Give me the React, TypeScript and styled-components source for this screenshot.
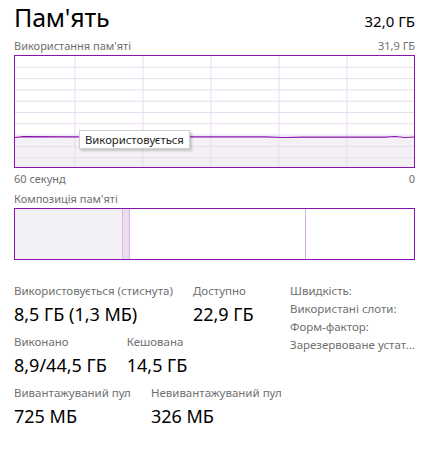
import React from "react";
import styled, { createGlobalStyle } from "styled-components";

const Global = createGlobalStyle`
  html, body { margin: 0; padding: 0; background: #ffffff; }
  body { font-family: "Noto Sans", "Open Sans", sans-serif; color: #000; }
`;

const Page = styled.div`
  width: 428px;
  height: 449px;
  box-sizing: border-box;
  padding: 0 13px 0 14px;
  display: flex;
  flex-direction: column;
  overflow: hidden;
`;

const Header = styled.div`
  display: flex;
  justify-content: space-between;
  align-items: baseline;
  height: 37px;
`;

const Title = styled.div`
  font-size: 25px;
  line-height: 34px;
  letter-spacing: -0.2px;
`;

const Total = styled.div`
  font-size: 15px;
  line-height: 20px;
`;

const Caption = styled.div<{ $h?: number }>`
  display: flex;
  justify-content: space-between;
  font-size: 11px;
  line-height: 16px;
  color: #6f6f6f;
  height: ${(p) => p.$h ?? 18}px;
  align-items: center;
`;

const Graph = styled.div`
  position: relative;
  height: 113px;
  border: 1px solid #8b12ae;
  box-sizing: border-box;
  background: #ffffff;
`;

const GraphSvg = styled.svg`
  display: block;
  width: 100%;
  height: 100%;
`;

const Tooltip = styled.div`
  position: absolute;
  left: 64px;
  top: 74px;
  height: 17px;
  padding: 0 5px;
  font-size: 11.3px;
  line-height: 17px;
  color: #222;
  background: #fff;
  border: 1px solid #cfcfcf;
  box-shadow: 2px 2px 2px rgba(0, 0, 0, 0.18);
`;

const Composition = styled.div`
  display: flex;
  height: 52px;
  border: 1px solid #8b12ae;
  box-sizing: border-box;
`;

const Segment = styled.div<{ $w?: number; $bg: string; $line?: string }>`
  ${(p) => (p.$w ? `width: ${p.$w}px;` : "flex: 1;")}
  background: ${(p) => p.$bg};
  border-right: ${(p) => (p.$line ? `1px solid ${p.$line}` : "none")};
`;

const Stats = styled.div`
  display: flex;
  margin-top: 23px;
`;

const LeftStats = styled.div`
  display: flex;
  flex-direction: column;
  width: 276px;
`;

const StatRow = styled.div<{ $h: number }>`
  display: flex;
  gap: 20px;
  height: ${(p) => p.$h}px;
`;

const Stat = styled.div`
  display: flex;
  flex-direction: column;
`;

const StatLabel = styled.div`
  font-size: 11.5px;
  line-height: 16px;
  color: #6f6f6f;
  white-space: nowrap;
`;

const StatValue = styled.div`
  font-size: 18px;
  line-height: 30px;
  color: #000;
  white-space: nowrap;
`;

const KeyList = styled.div`
  display: flex;
  flex-direction: column;
  margin-top: -1px;
`;

const KeyItem = styled.div`
  font-size: 11.5px;
  line-height: 18px;
  color: #6f6f6f;
  white-space: nowrap;
`;

const vLines = [60, 128, 196, 264, 332];
const hLines = [11.3, 22.6, 33.9, 45.2, 56.5, 67.8, 79.1, 90.4, 101.7];

export default function App() {
  return (
    <>
      <Global />
      <Page>
        <Header>
          <Title>Пам'ять</Title>
          <Total>32,0 ГБ</Total>
        </Header>
        <Caption>
          <span>Використання пам'яті</span>
          <span>31,9 ГБ</span>
        </Caption>
        <Graph>
          <GraphSvg viewBox="0 0 399 111" preserveAspectRatio="none">
            <path d="M0 80.5 L399 80.5 L399 111 L0 111 Z" fill="#f3f1f5" />
            {hLines.map((y) => (
              <line key={"h" + y} x1="0" x2="399" y1={y} y2={y} stroke="#e8dbee" strokeWidth="1" />
            ))}
            {vLines.map((x) => (
              <line key={"v" + x} x1={x} x2={x} y1="0" y2="111" stroke="#e8dbee" strokeWidth="1" />
            ))}
            <polyline
              points="0,81.5 8,80.7 60,80.9 250,80.9 268,81.5 288,81.1 370,81.1 380,80.5 390,81.5 399,81"
              fill="none"
              stroke="#8b12ae"
              strokeWidth="1.2"
            />
          </GraphSvg>
          <Tooltip>Використовується</Tooltip>
        </Graph>
        <Caption $h={21}>
          <span>60 секунд</span>
          <span>0</span>
        </Caption>
        <Caption $h={19}>
          <span>Композиція пам'яті</span>
        </Caption>
        <Composition>
          <Segment $w={107} $bg="#f3f1f5" $line="#d6b6e3" />
          <Segment $w={6} $bg="#ebdcf1" $line="#d6b6e3" />
          <Segment $w={175} $bg="#ffffff" $line="#d2aee0" />
          <Segment $bg="#ffffff" />
        </Composition>
        <Stats>
          <LeftStats>
            <StatRow $h={51}>
              <Stat>
                <StatLabel>Використовується (стиснута)</StatLabel>
                <StatValue>8,5 ГБ (1,3 МБ)</StatValue>
              </Stat>
              <Stat>
                <StatLabel>Доступно</StatLabel>
                <StatValue>22,9 ГБ</StatValue>
              </Stat>
            </StatRow>
            <StatRow $h={51}>
              <Stat>
                <StatLabel>Виконано</StatLabel>
                <StatValue>8,9/44,5 ГБ</StatValue>
              </Stat>
              <Stat>
                <StatLabel>Кешована</StatLabel>
                <StatValue>14,5 ГБ</StatValue>
              </Stat>
            </StatRow>
            <StatRow $h={51}>
              <Stat>
                <StatLabel>Вивантажуваний пул</StatLabel>
                <StatValue>725 МБ</StatValue>
              </Stat>
              <Stat>
                <StatLabel>Невивантажуваний пул</StatLabel>
                <StatValue>326 МБ</StatValue>
              </Stat>
            </StatRow>
          </LeftStats>
          <KeyList>
            <KeyItem>Швидкість:</KeyItem>
            <KeyItem>Використані слоти:</KeyItem>
            <KeyItem>Форм-фактор:</KeyItem>
            <KeyItem>Зарезервоване устат...</KeyItem>
          </KeyList>
        </Stats>
      </Page>
    </>
  );
}
